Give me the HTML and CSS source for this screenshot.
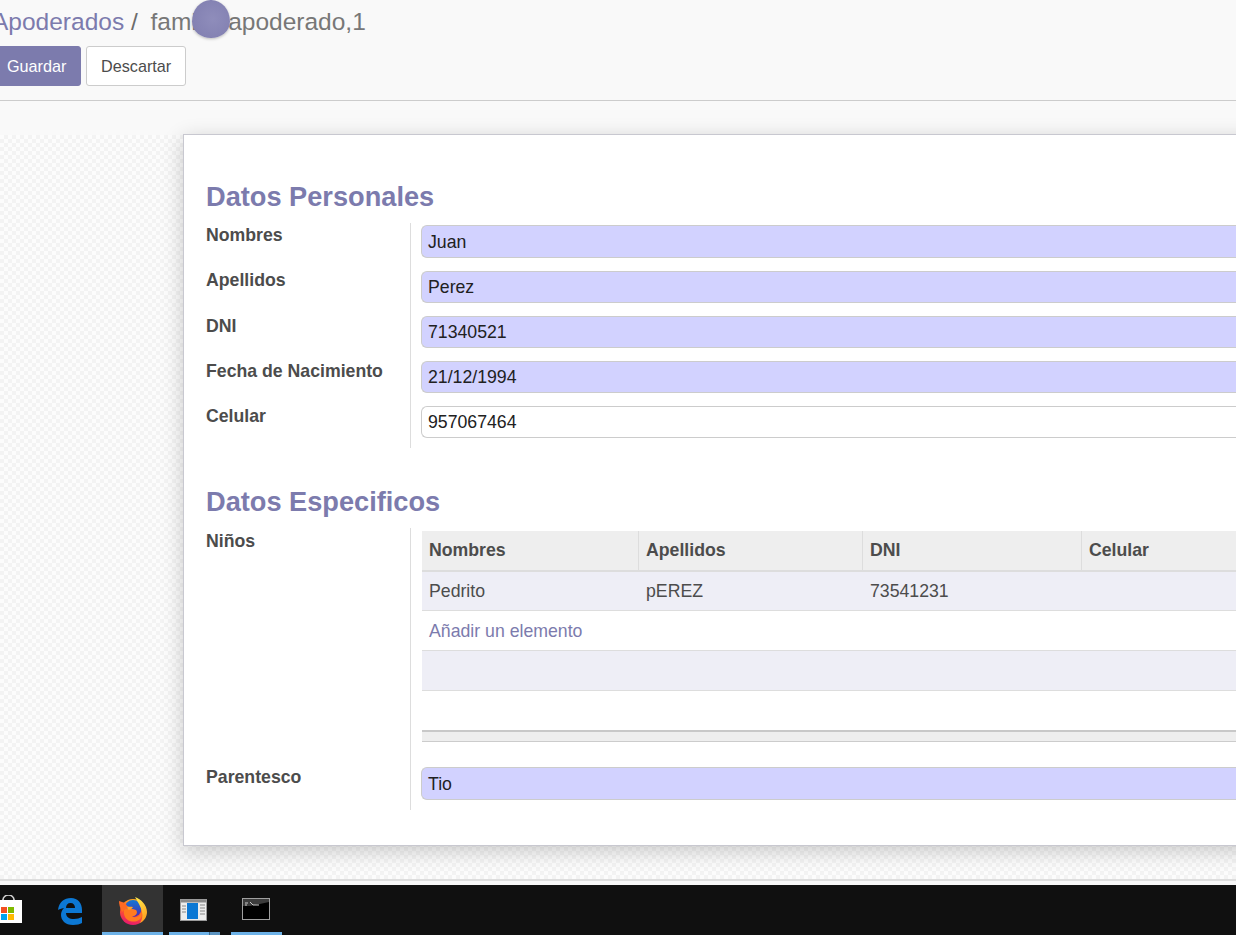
FILE: index.html
```html
<!DOCTYPE html>
<html lang="es">
<head>
<meta charset="utf-8">
<title>Apoderados</title>
<link rel="stylesheet" href="styles.css">
</head>
<body>
<div class="app">
  <header class="control-panel">
    <div class="breadcrumb"><a class="crumb-link">Apoderados</a><span class="crumb-sep"> / </span><span class="crumb-current">familia.apoderado,1</span></div>
    <div class="buttons">
      <button class="btn btn-primary">Guardar</button>
      <button class="btn btn-default">Descartar</button>
    </div>
    <span class="cursor-dot"></span>
  </header>
  <main class="content">
    <div class="backdrop">
      <section class="sheet">
        <h2 class="group-title first">Datos Personales</h2>
        <div class="form-group">
          <div class="row lead"><label>Nombres</label><div class="cell"><div class="input req">Juan</div></div></div>
          <div class="row"><label>Apellidos</label><div class="cell"><div class="input req">Perez</div></div></div>
          <div class="row"><label>DNI</label><div class="cell"><div class="input req">71340521</div></div></div>
          <div class="row"><label>Fecha de Nacimiento</label><div class="cell"><div class="input req">21/12/1994</div></div></div>
          <div class="row tail"><label>Celular</label><div class="cell"><div class="input">957067464</div></div></div>
        </div>
        <h2 class="group-title second">Datos Especificos</h2>
        <div class="form-group">
          <div class="row table-row"><label>Niños</label>
            <div class="cell">
              <div class="list">
                <div class="list-row head"><span class="c1">Nombres</span><span class="c2">Apellidos</span><span class="c3">DNI</span><span class="c4">Celular</span></div>
                <div class="list-row odd"><span class="c1">Pedrito</span><span class="c2">pEREZ</span><span class="c3">73541231</span><span class="c4"></span></div>
                <div class="list-row"><a class="add">Añadir un elemento</a></div>
                <div class="list-row odd"></div>
                <div class="list-row plain"></div>
                <div class="list-foot"></div>
              </div>
            </div>
          </div>
          <div class="row last"><label>Parentesco</label><div class="cell"><div class="input req">Tio</div></div></div>
        </div>
      </section>
    </div>
  </main>
  <div class="bottom-strip"></div>
  <footer class="taskbar">
    <div class="task store">
      <svg width="23" height="29" viewBox="0 0 23 29"><path d="M3 7V5a5 4.500 0 0 1 11 0v2" fill="none" stroke="#d0d0d0" stroke-width="1.600"/><path d="M0 5H22V28H0z" fill="#fff"/><path d="M3 5V4M14 5V4" stroke="#bbb"/><rect x="1" y="12" width="6" height="6" fill="#f25022"/><rect x="8" y="12" width="6" height="6" fill="#7fba00"/><rect x="1" y="19" width="6" height="6" fill="#00a4ef"/><rect x="8" y="19" width="6" height="6" fill="#ffb900"/></svg>
    </div>
    <div class="task edge">
      <svg width="24" height="27" viewBox="0 0 24 27"><path d="M0 12C1 4 6 0 13 0c7 0 11 5 11 12v3H8c.3 4 3 6 8 6 3 0 5.500-.7 8-2v6c-2 1-5 2-9 2C7 27 3 22 3 17c0-3 1-5 3-7-3 .5-5 1.500-6 2zM8 10h9c0-3-1.500-5-4.500-5S8 7 8 10z" fill="#0c78d4"/></svg>
    </div>
    <div class="task firefox">
      <svg width="28" height="28" viewBox="0 0 28 28"><defs><linearGradient id="fx" x1="0.700" y1="0" x2="0.400" y2="1"><stop offset="0" stop-color="#ffb320"/><stop offset=".5" stop-color="#ff5a26"/><stop offset="1" stop-color="#e6186f"/></linearGradient><linearGradient id="fy" x1="0.300" y1="0" x2="0.700" y2="1"><stop offset="0" stop-color="#ffe94a"/><stop offset="1" stop-color="#ff9a1c"/></linearGradient><linearGradient id="fb" x1="0.500" y1="0" x2="0.500" y2="1"><stop offset="0" stop-color="#1478d4"/><stop offset="1" stop-color="#4a2bb0"/></linearGradient></defs><circle cx="14" cy="15" r="13" fill="url(#fx)"/><circle cx="14" cy="11.500" r="8.500" fill="url(#fb)"/><path d="M16 0c6 2 12 8 12 15 0 5-3 9-7 11 2-3 3-7 2-11-1-5-4-10-7-15z" fill="url(#fy)"/><path d="M6 10c3 3 7 1 11 3 2 2 1 6-4 6.500 4 2 9-.5 9.500-6C23 17 24 22 18 24c-6 2-12-1-13-7-.4-3 0-5 1-7z" fill="#ff7a1f"/><path d="M7 9c2 1 5 .5 7 1-1 2-3 3-5 2.500z" fill="#ffa326"/><path d="M0 4l6 2 3 4-6 5c-2-4-3-8-3-11z" fill="#ff6a24"/></svg>
    </div>
    <div class="task window">
      <svg width="27" height="22" viewBox="0 0 27 22"><rect width="27" height="22" fill="#ececec"/><rect x="0.500" y="0.500" width="26" height="21" fill="none" stroke="#9a9a9a"/><rect x="1" y="1" width="25" height="2.500" fill="#8a8a8a"/><rect x="7" y="4" width="11" height="16" fill="#0c78d4"/><path d="M2 7h4M2 10h4M2 13h4M20 6h5M20 9h5M20 12h5M20 15h5" stroke="#a8a8a8" stroke-width="1.400"/></svg>
    </div>
    <div class="task console">
      <svg width="28" height="22" viewBox="0 0 28 22"><rect x="0.500" y="0.500" width="27" height="21" fill="#000" stroke="#a0a0a0"/><path d="M1 1H27V4L8 8H1z" fill="#3c3c3c"/><path d="M3 5h3M3 7h2M8 4l3 3h6" stroke="#c8c8c8" stroke-width="1" fill="none"/></svg>
    </div>
  </footer>
</div>
</body>
</html>
```
FILE: styles.css
```css
* { box-sizing: border-box; }
html, body { margin: 0; height: 100%; overflow: hidden; }
body { font-family: "Liberation Sans", Arial, sans-serif; color: #4c4c4c; background: #f9f9f9; }
.app { width: 1236px; height: 935px; display: flex; flex-direction: column; overflow: hidden; }

.control-panel { position: relative; z-index: 2; height: 101px; flex: none; background: #f9f9f9; border-bottom: 1px solid #ccc; padding-top: 8px; }
.breadcrumb { font-size: 24.500px; line-height: 28px; margin-left: -8px; white-space: nowrap; }
.crumb-link { color: #7c7bad; }
.crumb-sep { color: #6c6c6c; margin-right: 6px; }
.crumb-current { color: #777; }
.buttons { display: flex; gap: 5px; margin-top: 10px; margin-left: -8px; }
.btn { height: 40px; font: 16.200px "Liberation Sans", Arial, sans-serif; border-radius: 3px; padding: 1px 14px 0; }
.btn-primary { width: 89px; background: #7c7bad; color: #fff; border: 1px solid #7c7bad; }
.btn-default { width: 100px; background: #fff; color: #4c4c4c; border: 1px solid #ccc; }
.cursor-dot { position: absolute; left: 192px; top: 0; width: 38px; height: 38px; border-radius: 50% 50% 50% 50% / 58% 58% 44% 44%; background: radial-gradient(circle at 55% 50%, #8f8dbb, #7f7daf); box-shadow: 0 1px 3px rgba(0,0,0,.25); }

.content { flex: 1; min-height: 0; padding-top: 34px; overflow: hidden; background: #f9f9f9; }
.backdrop { display: flow-root; height: 100%; padding-left: 183px;
  background-color: #fcfcfc;
  background-image: conic-gradient(#f3f3f3 25%, #fcfcfc 0 50%, #f3f3f3 0 75%, #fcfcfc 0);
  background-size: 8px 8px; }
.sheet { width: 1200px; height: 712px; margin-top: -1px; background: #fff; border: 1px solid #c8c8d0; box-shadow: 0 5px 20px rgba(0,0,0,.2); padding: 0 0 0 22px; }

.bottom-strip { height: 6px; flex: none; background: #f7f7f7; border-top: 2px solid #ddd; }

.group-title { margin: 0; font-size: 27.200px; line-height: 32px; font-weight: 700; color: #7c7bad; }
.group-title.first { padding-top: 46px; height: 88px; }
.group-title.second { margin-top: 37.750px; height: 42px; }
.row { display: flex; }
.row label { width: 204px; flex: none; font-size: 17.700px; font-weight: 700; color: #4c4c4c; line-height: 20px; padding-top: 2px; }
.cell { flex: 1; border-left: 1px solid #ddd; padding: 2.480px 0 0 10px; min-width: 0; height: 45.250px; }
.input { height: 32px; border: 1px solid #ccc; border-radius: 6px 0 0 6px; border-right: 0; font-size: 17.700px; line-height: 31.200px; padding-left: 6px; color: #212121; background: #fff; }
.input.req { background: #d2d2ff; }
.lead .input { height: 33px; line-height: 33px; }
.tail .cell { height: 44.250px; }
.table-row .cell { height: 236px; padding-top: 3px; }
.table-row label, .last label { padding-top: 3px; }
.last .cell { height: 46px; padding-top: 3px; }
.last .input { height: 33px; line-height: 32px; }

.list { font-size: 17.700px; margin-left: 1px; }
.list-row { height: 40px; border-bottom: 1px solid #ddd; display: flex; align-items: center; }
.list-row.head { height: 41px; background: #eee; font-weight: 700; border-bottom: 2px solid #ddd; }
.list-row.odd { background: #eeeef6; }
.head + .odd { height: 39px; }
.list-row.plain { height: 39px; border-bottom: 0; }
.list-row span { display: block; padding-left: 7px; line-height: 38px; height: 100%; }
.list-row span + span { border-left: 1px solid transparent; }
.head span + span { border-left-color: #ddd; }
.c1 { width: 216px; }
.c2 { width: 224px; }
.c3 { width: 219px; }
.c4 { flex: 1; }
.add { color: #7c7bad; padding: 2px 0 0 7px; }
.list-foot { height: 12px; background: #eee; border-top: 2px solid #c8c8c8; border-bottom: 1px solid #ccc; }

.taskbar { height: 50px; flex: none; background: #101010; display: flex; align-items: stretch; }
.task { display: flex; align-items: center; justify-content: center; }
.store { width: 44px; justify-content: flex-start; align-items: flex-start; padding-top: 10px; }
.edge { width: 58px; padding: 2px 6px 0 0; }
.firefox { width: 61px; background: #333; border-bottom: 3px solid #6db2e8; padding-top: 4px; }
.window { width: 51px; margin-left: 6px; padding: 2px 2px 3px 0; background: linear-gradient(to right, #6db2e8 40px, #3d6a8c 40px, #3d6a8c 41px, #5b93c0 41px) no-repeat bottom / 100% 3px; }
.console { width: 51px; margin-left: 11px; border-bottom: 3px solid #6db2e8; padding: 1px 2px 0 0; }
```
